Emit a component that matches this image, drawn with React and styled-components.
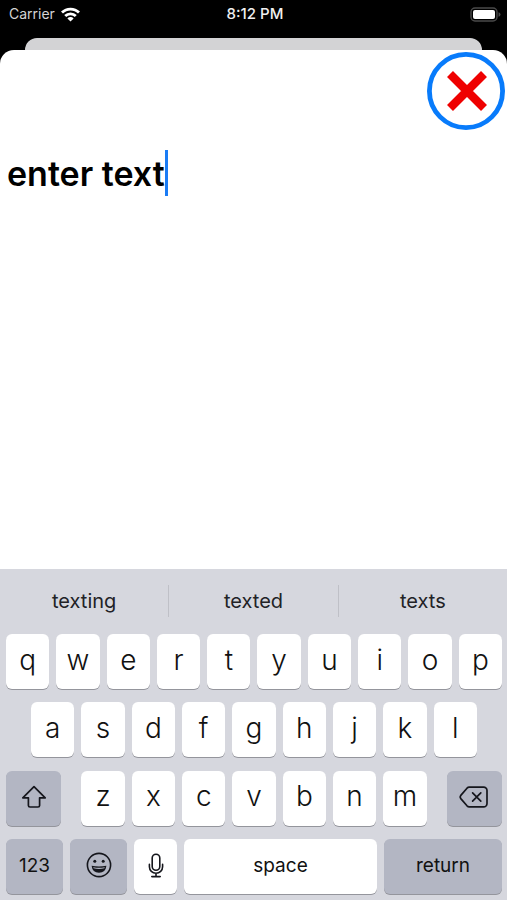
import React, { useState, useCallback } from 'react';
import styled, { createGlobalStyle } from 'styled-components';

const GlobalStyle = createGlobalStyle`
  * {
    box-sizing: border-box;
  }

  body {
    margin: 0;
    background-color: #000;
    font-family: Inter, "Liberation Sans", sans-serif;
  }

  button, input {
    margin: 0;
    padding: 0;
    border: none;
    font-family: inherit;
    color: inherit;
  }
`;

const Screen = styled.div`
  min-height: 100vh;
  display: flex;
  flex-direction: column;
  background-color: #000;
`;

const StatusBar = styled.header`
  height: 38px;
  padding: 0 6px 10px 9px;
  display: grid;
  grid-template-columns: 1fr auto 1fr;
  align-items: center;
  color: #fff;
  font-size: 14px;
  line-height: 20px;

  .carrier {
    display: flex;
    align-items: center;
    gap: 6px;
    color: #d4d4d4;
  }
  .time {
    font-size: 15px;
    font-weight: 500;
    color: #f0f0f0;
  }
  .battery {
    justify-self: end;
  }
  svg {
    display: block;
  }
`;

const BackSheet = styled.div`
  height: 12px;
  margin: 0 25px;
  border-radius: 12px 12px 0 0;
  background-color: #d3d3d5;
`;

const Sheet = styled.main`
  flex: 1;
  display: flex;
  flex-direction: column;
  border-radius: 14px 14px 0 0;
  background-color: #fff;
`;

const CloseButton = styled.button`
  align-self: flex-end;
  width: 78px;
  height: 78px;
  margin: 2px 2px 0 0;
  background: none;

  svg {
    display: block;
  }
`;

const TextField = styled.label`
  display: flex;
  align-items: center;
  height: 46px;
  margin-top: 20px;
  padding-left: 7px;

  input {
    field-sizing: content;
    max-width: 95%;
    height: 46px;
    background: none;
    outline: none;
    caret-color: transparent;
    color: #000;
    font-size: 34px;
    font-weight: 600;
  }
`;

const Caret = styled.span`
  width: 3px;
  height: 46px;
  background-color: #1a7cf5;
`;

const Keyboard = styled.section`
  padding-bottom: 6px;
  background-color: #d6d7de;
`;

const Suggestions = styled.div`
  height: 65px;
  padding-bottom: 2px;
  display: flex;
  align-items: center;
`;

const Suggestion = styled.button`
  flex: 1;
  height: 32px;
  background: none;
  color: #222226;
  font-size: 20px;
  line-height: 30px;

  & + & {
    border-left: 1px solid #bfc0c7;
  }
`;

const Rows = styled.div`
  min-height: 260px;
  padding: 0 5px 0 6px;
  display: flex;
  flex-direction: column;
  justify-content: space-between;
`;

const Row = styled.div`
  display: flex;
  gap: 7px;
  padding: 0 ${(props) => props.$inset || 0}px;
`;

const Key = styled.button`
  flex: ${(props) => props.$grow || 1} 1 0;
  min-width: 0;
  height: 55px;
  padding-bottom: ${(props) => (props.$small ? 2 : 4)}px;
  display: flex;
  align-items: center;
  justify-content: center;
  border-radius: 6px;
  background-color: ${(props) => (props.$dark ? '#b3b6c3' : '#fff')};
  box-shadow: 0 1px 0 #94959c;
  color: #111;
  font-size: ${(props) => (props.$small ? 19 : 28)}px;
  font-weight: ${(props) => (props.$small ? 400 : 300)};
`;

const Spacer = styled.span`
  flex: 14 1 0;
  margin: 0 -4px;
`;

const WifiIcon = () => (
  <svg width="19" height="15" viewBox="0 0 19 15" fill="none" stroke="#fff" strokeWidth="2.8">
    <path d="M1 5.6a12 12 0 0 1 17 0" />
    <path d="M4.2 9.1a7.5 7.5 0 0 1 10.6 0" />
    <path d="M9.5 14.6 6.4 11.4a4.4 4.4 0 0 1 6.2 0z" fill="#fff" stroke="none" />
  </svg>
);

const BatteryIcon = () => (
  <svg className="battery" width="31" height="15" viewBox="0 0 31 15">
    <rect x="1" y="1" width="26" height="13" rx="4" fill="none" stroke="#4a4a4a" strokeWidth="1.4" />
    <rect x="3" y="3" width="22" height="9" rx="2" fill="#fff" />
    <path d="M28.5 5.2q2 .6 2 2.3t-2 2.3z" fill="#4a4a4a" />
  </svg>
);

const CloseIcon = () => (
  <svg width="78" height="78" viewBox="0 0 78 78" fill="none">
    <circle cx="39" cy="39" r="36.6" stroke="#087bfb" strokeWidth="4.8" />
    <path d="M23 22 57 56M57 22 23 56" stroke="#ef0000" strokeWidth="8.4" />
  </svg>
);

const ShiftIcon = () => (
  <svg width="26" height="24" viewBox="0 0 26 24" fill="none" stroke="#15161c" strokeWidth="1.7" strokeLinejoin="round">
    <path d="M13 1.6 24.2 12.8H18.6V20.4q0 1.6-1.6 1.6H9q-1.6 0-1.6-1.6V12.8H1.8z" />
  </svg>
);

const DeleteIcon = () => (
  <svg width="30" height="22" viewBox="0 0 30 22" fill="none" stroke="#15161c" strokeWidth="1.7" strokeLinecap="round" strokeLinejoin="round">
    <path d="M10.2 1.2H24.6a3.4 3.4 0 0 1 3.4 3.4V17.4a3.4 3.4 0 0 1-3.4 3.4H10.2Q9 20.8 8 19.8L1.8 12.6Q.6 11 1.8 9.4L8 2.2Q9 1.2 10.2 1.2z" />
    <path d="M13.6 6.8 21.8 15.2M21.8 6.8 13.6 15.2" />
  </svg>
);

const EmojiIcon = () => (
  <svg width="26" height="26" viewBox="0 0 26 26" fill="none" stroke="#15161c" strokeWidth="1.6">
    <circle cx="13" cy="13" r="11.6" />
    <circle cx="8.8" cy="9.2" r="1.5" fill="#15161c" stroke="none" />
    <circle cx="17.2" cy="9.2" r="1.5" fill="#15161c" stroke="none" />
    <path d="M5.6 13.8Q13 15.4 20.4 13.8 19.6 20.8 13 20.8T5.6 13.8z" fill="#15161c" stroke="none" />
    <path d="M7.2 15.2Q13 16.4 18.8 15.2L18.4 16.2Q13 17.6 7.6 16.2z" fill="#b3b6c3" stroke="none" />
  </svg>
);

const MicIcon = () => (
  <svg width="16" height="25" viewBox="0 0 16 25" fill="none" stroke="#15161c" strokeWidth="1.6" strokeLinecap="round">
    <rect x="4.2" y="1.2" width="7.6" height="16" rx="3.8" />
    <path d="M1.4 11.4v2.4a6.6 6.4 0 0 0 13.2 0v-2.4M8 20.4v3M3.8 23.6h8.4" />
  </svg>
);

const suggestions = ['texting', 'texted', 'texts'];

const App = () => {
  const [text, setText] = useState('enter text');

  const handleText = useCallback((e) => {
    setText(e.target.value);
  }, []);

  const addLetter = useCallback((letter) => {
    setText((state) => state + letter);
  }, []);

  const onDelete = useCallback(() => {
    setText((state) => state.slice(0, -1));
  }, []);

  // swap the last word for the suggestion
  const onSuggest = useCallback((word) => {
    setText((state) => state.replace(/\S*$/, word));
  }, []);

  const renderLetters = (letters) =>
    letters.split('').map((letter) => (
      <Key key={letter} $grow={43} onClick={() => addLetter(letter)}>{letter}</Key>
    ));

  return (
    <Screen>
      <GlobalStyle />
      <StatusBar>
        <div className="carrier">Carrier <WifiIcon /></div>
        <div className="time">8:12 PM</div>
        <BatteryIcon />
      </StatusBar>
      <BackSheet />
      <Sheet>
        <CloseButton aria-label="Close">
          <CloseIcon />
        </CloseButton>
        <TextField>
          <input type="text" aria-label="Text" value={text} onChange={handleText} />
          <Caret />
        </TextField>
      </Sheet>

      <Keyboard>
        <Suggestions>
          {suggestions.map((word) => (
            <Suggestion key={word} onClick={() => onSuggest(word)}>{word}</Suggestion>
          ))}
        </Suggestions>
        <Rows>
          <Row>{renderLetters('qwertyuiop')}</Row>
          <Row $inset={25}>{renderLetters('asdfghjkl')}</Row>
          <Row>
            <Key $dark $small $grow={55} aria-label="Shift"><ShiftIcon /></Key>
            <Spacer />
            {renderLetters('zxcvbnm')}
            <Spacer />
            <Key $dark $small $grow={55} aria-label="Delete" onClick={onDelete}><DeleteIcon /></Key>
          </Row>
          <Row>
            <Key $dark $small $grow={57}>123</Key>
            <Key $dark $small $grow={57} aria-label="Emoji"><EmojiIcon /></Key>
            <Key $small $grow={43} aria-label="Dictate"><MicIcon /></Key>
            <Key $small $grow={193} onClick={() => addLetter(' ')}>space</Key>
            <Key $dark $small $grow={118}>return</Key>
          </Row>
        </Rows>
      </Keyboard>
    </Screen>
  );
};

export default App;
